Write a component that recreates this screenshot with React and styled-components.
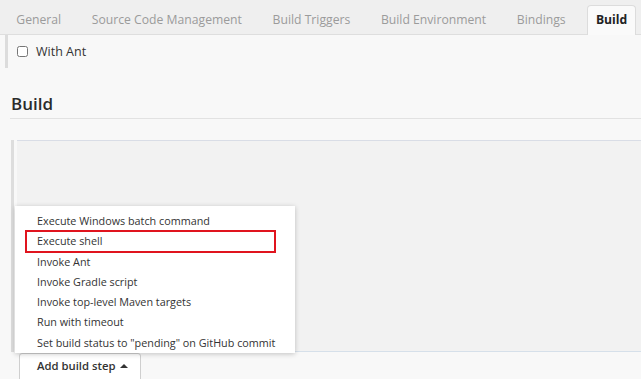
import React from 'react';
import styled, { createGlobalStyle } from 'styled-components';

const GlobalStyle = createGlobalStyle`
  html, body {
    margin: 0;
    background: #f8f8f8;
    font-family: "Open Sans", "Noto Sans", sans-serif;
    color: #333;
  }
`;

const tabs = ['General', 'Source Code Management', 'Build Triggers', 'Build Environment', 'Bindings', 'Build'];

const steps = [
  'Execute Windows batch command',
  'Execute shell',
  'Invoke Ant',
  'Invoke Gradle script',
  'Invoke top-level Maven targets',
  'Run with timeout',
  'Set build status to "pending" on GitHub commit',
];

function App() {
  return (
    <Page>
      <GlobalStyle />
      <TabBar>
        {tabs.map((t) => (
          <Tab key={t} $active={t === 'Build'}>{t}</Tab>
        ))}
      </TabBar>
      <OptionRow>
        <Check type="checkbox" />
        <span>With Ant</span>
      </OptionRow>
      <SectionTitle>Build</SectionTitle>
      <BuildBlock>
        <StepArea>
          <Menu>
            {steps.map((s) => (
              <MenuItem key={s} $marked={s === 'Execute shell'}>{s}</MenuItem>
            ))}
          </Menu>
        </StepArea>
      </BuildBlock>
      <AddButton>
        Add build step
        <Caret viewBox="0 0 8 5">
          <path d="M0 5 L4 1 L8 5 Z" fill="#333" />
        </Caret>
      </AddButton>
    </Page>
  );
}

export default App;

const Page = styled.div`
  width: 641px;
  height: 379px;
  overflow: hidden;
`;

const TabBar = styled.div`
  display: flex;
  align-items: flex-end;
  height: 34px;
  background: #efefef;
  border-bottom: 1px solid #dedede;
  padding-left: 1px;
`;

const Tab = styled.div`
  flex-shrink: 0;
  white-space: nowrap;
  box-sizing: border-box;
  height: 30px;
  line-height: 28px;
  padding: 0 14.3px;
  font-size: 12.2px;
  color: ${(p) => (p.$active ? '#222' : '#9b9b9b')};
  font-weight: ${(p) => (p.$active ? 700 : 400)};
  background: ${(p) => (p.$active ? '#fafafa' : 'transparent')};
  border: 1px solid ${(p) => (p.$active ? '#dcdcdc' : 'transparent')};
  border-bottom: none;
  border-radius: 4px 4px 0 0;
  margin-bottom: -1px;
  ${(p) => p.$active && 'margin-left: 6px; padding: 0 8px;'}
`;

const OptionRow = styled.div`
  display: flex;
  align-items: center;
  gap: 8px;
  height: 33px;
  margin-left: 5px;
  border-left: 3px solid #dcdcdc;
  padding-left: 9px;
  font-size: 12.5px;
  color: #333;
`;

const Check = styled.input`
  width: 11px;
  height: 11px;
  margin: 0;
`;

const SectionTitle = styled.h2`
  margin: 25px 0 0 10px;
  padding: 0 0 3px 1px;
  font-size: 17px;
  font-weight: 600;
  line-height: 22px;
  color: #2b2b2b;
  border-bottom: 1px solid #e2e2e2;
`;

const BuildBlock = styled.div`
  margin: 21px 0 0 11px;
  padding-left: 3px;
  border-left: 3px solid #dddddd;
`;

const StepArea = styled.div`
  position: relative;
  height: 210px;
  background: #f2f2f2;
  border-top: 1px solid #d9dde6;
  border-bottom: 1px solid #d6e0ea;
`;

const Menu = styled.ul`
  position: absolute;
  left: -2px;
  top: 65px;
  width: 280px;
  height: 147px;
  box-sizing: border-box;
  margin: 0;
  padding: 5px 0 0;
  list-style: none;
  background: #fff;
  box-shadow: 0 1px 5px rgba(0, 0, 0, 0.22);
`;

const MenuItem = styled.li`
  box-sizing: border-box;
  height: 20.3px;
  line-height: 20px;
  margin: 0 20px 0 11px;
  padding-left: 11px;
  font-size: 10.8px;
  color: #333;
  white-space: nowrap;
  outline: ${(p) => (p.$marked ? '2px solid #e0141e' : 'none')};
  outline-offset: -1px;
`;

const AddButton = styled.button`
  display: flex;
  align-items: center;
  gap: 5px;
  margin: 1px 0 0 19px;
  height: 30px;
  padding: 0 12px 6px 17px;
  background: #fff;
  border: 1px solid #cfcfcf;
  border-radius: 3px 3px 0 0;
  font-family: "Open Sans", "Noto Sans", sans-serif;
  font-size: 11.3px;
  font-weight: 600;
  color: #333;
`;

const Caret = styled.svg`
  width: 8px;
  height: 5px;
`;
